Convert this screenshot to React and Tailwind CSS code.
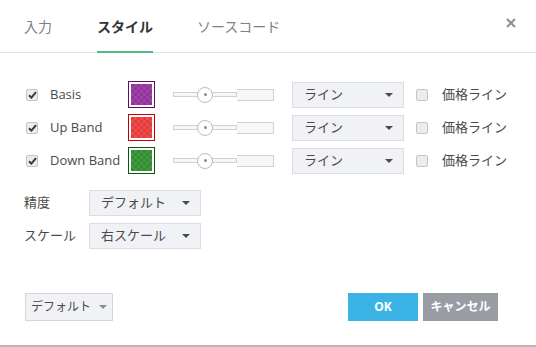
import React from "react";

const FONT = "font-['Open_Sans','Noto_Sans_CJK_JP',sans-serif]";

const ROWS = [
  { label: "Basis", border: "#5a0e62", a: "#9e42aa", b: "#90349c" },
  { label: "Up Band", border: "#c40000", a: "#f14a4a", b: "#e23c3c" },
  { label: "Down Band", border: "#0b560b", a: "#3f9a3f", b: "#348c34" },
];

function Check({ checked }) {
  return (
    <div className="shrink-0 w-[12px] h-[12px] rounded-[2px] border border-[#c3c5ca] bg-[#ececec] flex items-center justify-center">
      {checked && (
        <svg width="9" height="8" viewBox="0 0 9 8">
          <path d="M1 4.2 L3.4 6.6 L8 1.2" fill="none" stroke="#3a3a3a" strokeWidth="2" />
        </svg>
      )}
    </div>
  );
}

function Caret({ color = "#4a4a4a" }) {
  return (
    <svg width="8" height="4" viewBox="0 0 8 4">
      <path d="M0 0 L8 0 L4 4 Z" fill={color} />
    </svg>
  );
}

function Swatch({ row, id }) {
  return (
    <div className="shrink-0 w-[27px] h-[27px] p-[2px] bg-white border" style={{ borderColor: row.border }}>
      <svg width="21" height="21" className="block">
        <defs>
          <pattern id={id} width="6" height="6" patternUnits="userSpaceOnUse">
            <rect width="6" height="6" fill={row.a} />
            <rect width="3" height="3" fill={row.b} />
            <rect x="3" y="3" width="3" height="3" fill={row.b} />
          </pattern>
        </defs>
        <rect width="21" height="21" fill={`url(#${id})`} />
      </svg>
    </div>
  );
}

function Slider() {
  return (
    <div className="relative shrink-0 w-[101px] h-[16px] flex items-center">
      <div className="w-[64px] h-[5px] border border-[#cfd1d6] bg-[#f7f7f7]" />
      <div className="w-[37px] h-[12px] border border-[#cfd1d6] border-l-0 bg-[#f7f7f7]" />
      <div className="absolute left-[24px] top-0 w-[16px] h-[16px] rounded-full border border-[#b9bcc3] bg-white flex items-center justify-center">
        <div className="w-[3px] h-[3px] rounded-full bg-[#8a8d94]" />
      </div>
    </div>
  );
}

function Select({ value }) {
  return (
    <div className="shrink-0 w-[112px] h-[26px] bg-[#f1f2f6] border border-[#dcdde1] flex items-center justify-between pl-[11px] pr-[10px] text-[13px] text-[#4a4a4a]">
      <span>{value}</span>
      <Caret />
    </div>
  );
}

export default function App() {
  return (
    <div className={`w-[536px] h-[347px] bg-white flex flex-col ${FONT} text-[#4a4a4a]`}>
      {/* tabs */}
      <div className="h-[53px] border-b border-[#e1e3e8] flex items-stretch pl-[24px] pr-[20px]">
        <div className="flex items-center text-[14px] text-[#7d8088] mr-[45px]">入力</div>
        <div className="relative flex items-center text-[14px] font-bold text-[#333] mr-[44px]">
          スタイル
          <div className="absolute left-0 right-0 bottom-[-1px] h-[2px] bg-[#53b987]" />
        </div>
        <div className="flex items-center text-[14px] text-[#7d8088]">ソースコード</div>
        <div className="ml-auto flex items-center pb-[6px]">
          <svg width="10" height="10" viewBox="0 0 10 10">
            <path d="M1 1 L9 9 M9 1 L1 9" stroke="#8e9096" strokeWidth="2" />
          </svg>
        </div>
      </div>

      {/* body */}
      <div className="flex flex-col pl-[26px] pt-[28px]">
        <div className="flex flex-col gap-[6px]">
          {ROWS.map((row, i) => (
            <div key={row.label} className="flex items-center h-[27px] text-[13px] whitespace-nowrap">
              <Check checked />
              <span className="shrink-0 ml-[12px] w-[78px]">{row.label}</span>
              <Swatch row={row} id={`chk${i}`} />
              <div className="ml-[18px]">
                <Slider />
              </div>
              <div className="ml-[18px]">
                <Select value="ライン" />
              </div>
              <div className="ml-[12px]">
                <Check />
              </div>
              <span className="ml-[14px]">価格ライン</span>
            </div>
          ))}
        </div>

        <div className="flex flex-col gap-[7px] mt-[16px] text-[13px]">
          <div className="flex items-center">
            <span className="w-[65px] -ml-[2px]">精度</span>
            <Select value="デフォルト" />
          </div>
          <div className="flex items-center">
            <span className="w-[65px] -ml-[2px]">スケール</span>
            <Select value="右スケール" />
          </div>
        </div>
      </div>

      {/* footer */}
      <div className="flex items-center pl-[25px] pr-[38px] mt-[44px]">
        <div className="w-[88px] h-[28px] bg-[#f1f2f6] border border-[#d6d7db] flex items-center justify-center gap-[8px] text-[12px] text-[#4a4a4a]">
          <span>デフォルト</span>
          <Caret color="#8c8e93" />
        </div>
        <div className="ml-auto flex gap-[5px]">
          <div className="w-[70px] h-[28px] bg-[#3bb4e5] text-white text-[12px] font-bold flex items-center justify-center">
            OK
          </div>
          <div className="w-[75px] h-[28px] bg-[#9a9ca3] text-white text-[12px] font-bold flex items-center justify-center">
            キャンセル
          </div>
        </div>
      </div>

      <div className="mt-auto h-[2px] bg-[#b8b8b8]" />
    </div>
  );
}
